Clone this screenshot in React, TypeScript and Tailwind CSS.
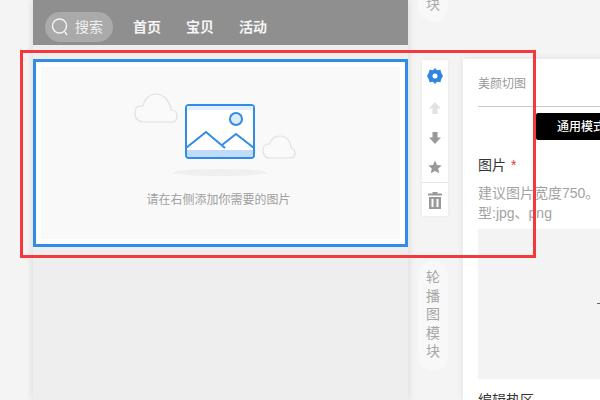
import React from 'react';

const font = { fontFamily: '"Liberation Sans", "Noto Sans CJK SC", sans-serif' };

const EmptyPicture = () => (
  <svg width="170" height="90" viewBox="0 0 170 90" fill="none">
    <path d="M14 32h28c4 0 5-3 5-6 0-3-2-6-6-6-1-8-7-16-15-16-7 0-12 6-13 12-1 0-2 0-3 0-4 0-5 4-5 8 0 4 3 8 9 8z" fill="#fafafa" stroke="#e0e0e0" strokeWidth="1.2" />
    <path d="M139 68h21c3 0 5-2 5-5 0-3-2-5-4-5 0-7-5-12-11-12-5 0-9 3-10 8-1 0-1 0-2 0-3 0-5 3-5 7 0 4 3 7 6 7z" fill="#fafafa" stroke="#e0e0e0" strokeWidth="1.2" />
    <ellipse cx="90" cy="82.5" rx="47" ry="3.5" fill="#efefef" />
    <rect x="56" y="15" width="68" height="53" rx="3" fill="#fff" stroke="#318ce7" strokeWidth="2" />
    <rect x="57" y="16" width="66" height="4" fill="#e2effc" />
    <path d="M57 60h66v5a2 2 0 0 1-2 2H59a2 2 0 0 1-2-2z" fill="#c0dcf8" />
    <circle cx="106" cy="29" r="6" fill="#dcebfb" stroke="#318ce7" strokeWidth="2" />
    <path d="M56 58l20-16 19 16M92 55l14-11 18 14" stroke="#318ce7" strokeWidth="2" />
  </svg>
);

const App: React.FC = () => {
  return (
    <div className="relative flex h-[400px] w-[600px] overflow-hidden bg-[#f4f4f4] pl-[33px]" style={font}>
      {/* Phone preview */}
      <div className="flex w-[375px] shrink-0 flex-col bg-[#eeeeee] shadow-[0_0_8px_rgba(0,0,0,0.12)]">
        <div className="flex h-[45px] items-end bg-[#8f8f8f] pb-[3px] pl-[12px]">
          <div className="flex h-[30px] w-[68px] items-center gap-[6px] rounded-full bg-[#aaaaaa] pl-[6px] text-[14px] text-[#f0f0f0]">
            <svg width="18" height="20" viewBox="0 0 18 20" fill="none" stroke="#f4f4f4" strokeWidth="1.4">
              <circle cx="8.5" cy="9" r="7" />
              <path d="M14 15l2 3" />
            </svg>
            <span>搜索</span>
          </div>
          <div className="ml-[20px] flex h-[30px] items-center gap-[25px] text-[14px] font-bold text-[#f5f5f5]">
            <span>首页</span>
            <span>宝贝</span>
            <span>活动</span>
          </div>
        </div>
        <div className="mt-[14px] h-[188px] border-[3px] border-[#318ce7] bg-white p-[5px]">
          <div className="flex h-full flex-col items-center bg-[#f9f9f9] pt-[23px]">
            <div className="-ml-[11px]">
              <EmptyPicture />
            </div>
            <p className="-ml-[4px] mt-[12px] text-[12px] leading-[16px] text-[#a0a0a0]">请在右侧添加你需要的图片</p>
          </div>
        </div>
      </div>

      {/* Module tools */}
      <div className="ml-[10px] flex w-[30px] shrink-0 flex-col">
        <div className="-mt-[8px] flex h-[30px] w-[30px] items-end justify-center rounded-b-[15px] bg-[#f8f8f8] pb-[8px] text-[14px] leading-[18px] text-[#aaaaaa]">
          <span className="-translate-y-[1px]">块</span>
        </div>
        <div className="ml-[4px] mt-[38px] flex h-[156px] w-[26px] flex-col items-center bg-white shadow-[0_0_4px_rgba(0,0,0,0.06)]">
          <svg className="mt-[8px]" width="16" height="16" viewBox="0 0 16 16">
            <path fillRule="evenodd" fill="#2f86e0" d="M8 0l2 2.2 3.4-.4.9 3.2L16 8l-1.7 3-.9 3.2-3.4-.4L8 16l-2-2.2-3.4.4-.9-3.2L0 8l1.7-3 .9-3.2 3.4.4zM8 5.5a2.5 2.5 0 1 0 0 5 2.5 2.5 0 0 0 0-5z" />
          </svg>
          <svg className="mt-[18px]" width="12" height="12" viewBox="0 0 12 12">
            <path fill="#e2e2e2" d="M6 0l6 6.5H8.5V12h-5V6.5H0z" />
          </svg>
          <svg className="mt-[18px]" width="12" height="12" viewBox="0 0 12 12">
            <path fill="#999999" d="M6 12L0 5.5h3.5V0h5v5.5H12z" />
          </svg>
          <svg className="mt-[16px]" width="14" height="14" viewBox="0 0 14 14">
            <path fill="#999999" d="M7 .5l2 4.4 4.8.5-3.6 3.2 1 4.7L7 10.9l-4.2 2.4 1-4.7L.2 5.4 5 4.9z" />
          </svg>
          <div className="mt-[8px] h-px w-full bg-[#e5e5e5]" />
          <svg className="mt-[9px]" width="14" height="17" viewBox="0 0 14 17">
            <path fillRule="evenodd" fill="#999999" d="M4.5 0h5v1.5H14V3.5H0V1.5h4.5zM1 5h12v12H1zM3.5 7v8h2V7zM8.5 7v8h2V7z" />
          </svg>
        </div>
        <div className="mt-[45px] flex h-[110px] w-[30px] flex-col items-center rounded-[15px] bg-[#f8f8f8] py-[7px] text-[14px] leading-[18.5px] text-[#a6a6a6]">
          <span>轮</span>
          <span>播</span>
          <span>图</span>
          <span>模</span>
          <span>块</span>
        </div>
      </div>

      {/* Settings panel */}
      <div className="ml-[15px] mt-[59px] w-[300px] shrink-0 bg-white pl-[15px] shadow-[0_0_8px_rgba(0,0,0,0.08)]">
        <div className="flex h-[48px] items-center border-b border-[#cccccc] pt-[3px] text-[12px] text-[#999999]">美颜切图</div>
        <div className="ml-[58px] mt-[6px] flex h-[27px] w-[200px] items-center rounded-[2px] bg-black pl-[21px] text-[12px] font-medium text-white">
          通用模式
        </div>
        <div className="mt-[15px] flex h-[20px] items-center text-[14px] text-[#333333]">
          图片<span className="ml-[5px] text-[#e53935]">*</span>
        </div>
        <div className="mt-[8px] w-[122px] whitespace-nowrap text-[14px] leading-[20px] text-[#a3a3a3]">
          <p>建议图片宽度750。</p>
          <p>型:jpg、png</p>
        </div>
        <div className="relative mt-[6px] h-[150px] bg-[#f3f3f3]">
          <span className="absolute left-[119px] top-[74px] h-px w-[6px] bg-[#666666]" />
        </div>
        <div className="mt-[12px] text-[14px] leading-[18px] text-[#333333]">编辑热区</div>
      </div>

      {/* Annotation frame */}
      <div className="pointer-events-none absolute left-[20px] top-[50px] h-[208px] w-[516px] border-[3px] border-[#f5383b]" />
    </div>
  );
};

export default App;
